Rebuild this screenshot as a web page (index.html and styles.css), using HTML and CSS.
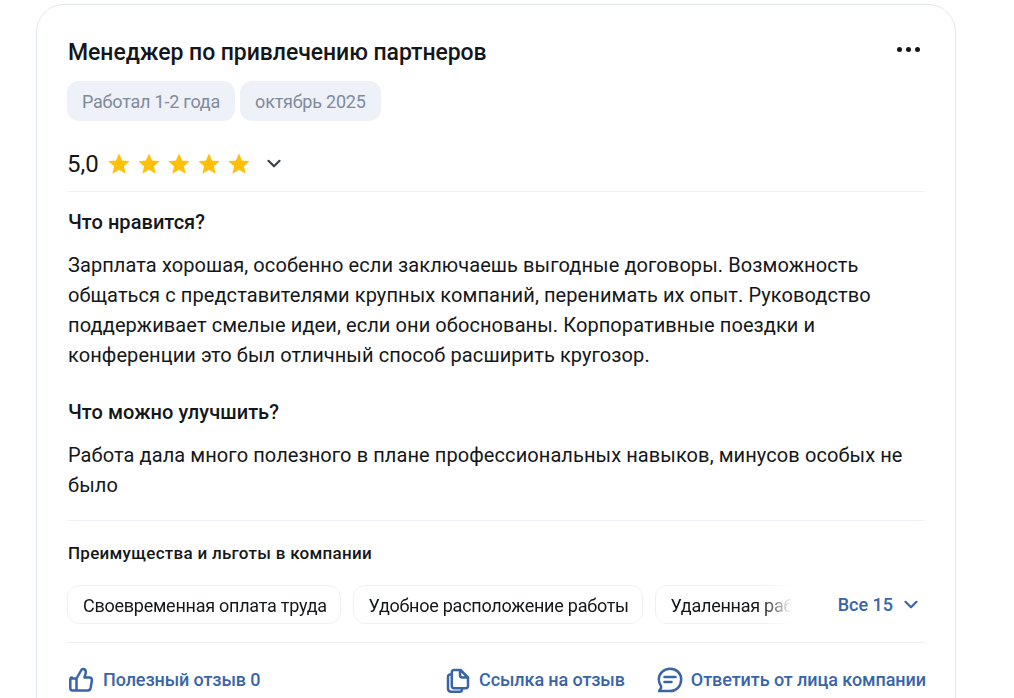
FILE: index.html
```html
<!DOCTYPE html>
<html lang="ru">
<head>
<meta charset="utf-8">
<title>Отзыв</title>
<link rel="stylesheet" href="styles.css">
</head>
<body>
<article class="card">
  <header class="head">
    <h2 class="title">Менеджер по привлечению партнеров</h2>
    <button class="more" aria-label="Ещё"><i></i><i></i><i></i></button>
  </header>
  <div class="tags">
    <span class="tag">Работал 1-2 года</span>
    <span class="tag">октябрь 2025</span>
  </div>
  <div class="rating">
    <span class="score">5,0</span>
    <span class="stars">
      <svg class="star" viewBox="0 0 24 24"><path d="M12 1.500l3.100 7.100 7.600.7-5.800 5 1.800 7.500L12 17.800l-6.700 4 1.800-7.500-5.800-5 7.600-.7z"/></svg>
      <svg class="star" viewBox="0 0 24 24"><path d="M12 1.500l3.100 7.100 7.600.7-5.800 5 1.800 7.500L12 17.800l-6.700 4 1.800-7.500-5.800-5 7.600-.7z"/></svg>
      <svg class="star" viewBox="0 0 24 24"><path d="M12 1.500l3.100 7.100 7.600.7-5.800 5 1.800 7.500L12 17.800l-6.700 4 1.800-7.500-5.800-5 7.600-.7z"/></svg>
      <svg class="star" viewBox="0 0 24 24"><path d="M12 1.500l3.100 7.100 7.600.7-5.800 5 1.800 7.500L12 17.800l-6.700 4 1.800-7.500-5.800-5 7.600-.7z"/></svg>
      <svg class="star" viewBox="0 0 24 24"><path d="M12 1.500l3.100 7.100 7.600.7-5.800 5 1.800 7.500L12 17.800l-6.700 4 1.800-7.500-5.800-5 7.600-.7z"/></svg>
    </span>
    <svg class="chev chev-dark" viewBox="0 0 14 10"><path d="M1.500 1.800L7 7.300l5.500-5.500"/></svg>
  </div>
  <section class="body">
    <h3 class="q">Что нравится?</h3>
    <p class="a">Зарплата хорошая, особенно если заключаешь выгодные договоры. Возможность общаться с представителями крупных компаний, перенимать их опыт. Руководство поддерживает смелые идеи, если они обоснованы. Корпоративные поездки и конференции это был отличный способ расширить кругозор.</p>
    <h3 class="q q2">Что можно улучшить?</h3>
    <p class="a">Работа дала много полезного в плане профессиональных навыков, минусов особых не было</p>
  </section>
  <section class="perks">
    <h4 class="perks-title">Преимущества и льготы в компании</h4>
    <div class="perks-row">
      <div class="perks-list">
        <span class="perk">Своевременная оплата труда</span>
        <span class="perk">Удобное расположение работы</span>
        <span class="perk">Удаленная работа</span>
      </div>
      <button class="all">Все 15
        <svg class="chev chev-blue" viewBox="0 0 14 10"><path d="M1.500 1.800L7 7.300l5.500-5.500"/></svg>
      </button>
    </div>
  </section>
  <footer class="actions">
    <a class="act act-first">
      <svg class="ico" viewBox="0 0 26 26"><path d="M8.500 11.500v12M3.800 11.500h4.700l4.600-8c.4-1 1-1.500 1.900-1.500 1.700 0 2.800 1.200 2.800 2.900 0 1.900-.8 3.700-1.300 5.600h5c1.600 0 2.700 1.400 2.400 3l-1.300 7.500c-.3 1.500-1.400 2.500-2.900 2.500H4.500c-1.300 0-2.200-.9-2.200-2.200v-8.300c0-1.300.6-2.500 1.500-2.500z"/></svg>
      Полезный отзыв 0
    </a>
    <div class="act-right">
      <a class="act">
        <svg class="ico" viewBox="0 0 26 26"><path d="M9 3h6.500L23 10.500V19c0 1.300-.9 2.200-2.200 2.200H9c-1.300 0-2.200-.9-2.200-2.200V5.200C6.800 3.900 7.700 3 9 3zM15 3.200V8c0 1.600 1 2.600 2.600 2.600h5.200M6.800 7.500H5.200C3.900 7.500 3 8.400 3 9.700v11.800c0 1.900 1.300 3.200 3.200 3.200h8.600c1.300 0 2.200-.9 2.200-2.200v-1.200"/></svg>
        Ссылка на отзыв
      </a>
      <a class="act act-reply">
        <svg class="ico" viewBox="0 0 26 26"><path d="M13 1.800C6.700 1.800 1.800 6.600 1.800 12.600c0 2.300.7 4.400 2 6.100.5.700.4 3-1.800 5.300h9.500c.5.100 1 .1 1.500.1 6.300 0 11.200-4.900 11.200-11.500S19.300 1.800 13 1.800zM7.500 10h11M7.500 15h7"/></svg>
        Ответить от лица компании
      </a>
    </div>
  </footer>
</article>
</body>
</html>
```
FILE: styles.css
```css
* { box-sizing: border-box; }
html, body { margin: 0; height: 698px; overflow: hidden; background: #fff; }
body {
  font-family: Roboto, "Noto Sans", sans-serif;
  color: #14171a;
  padding: 4px 58px 0 36px;
}
.card {
  border: 1px solid #e1e6ef;
  border-radius: 28px;
  padding: 31px 30px 0;
  height: 720px;
}
.head { display: flex; justify-content: space-between; align-items: flex-start; }
.title { margin: 0; padding-left: 1px; font-size: 23px; line-height: 34px; font-weight: 500; letter-spacing: -.06px; }
.more { display: flex; gap: 4px; border: 0; background: none; padding: 0; margin: 11px 5px 0 0; }
.more i { width: 5px; height: 5px; border-radius: 50%; background: #14171a; }
.tags { display: flex; gap: 5px; margin-top: 11px; }
.tag {
  background: #eef1f8;
  color: #7f8a9c;
  font-size: 18px;
  letter-spacing: -.22px;
  line-height: 40px;
  height: 40px;
  padding: 1px 15px 0;
  border-radius: 12px;
}
.rating { display: flex; align-items: center; height: 36px; margin-top: 25px; }
.score { font-size: 24px; line-height: 36px; font-weight: 400; margin-right: 8px; }
.stars { display: flex; gap: 6px; }
.star { width: 24px; height: 24px; fill: #ffc107; display: block; }
.chev { fill: none; stroke-width: 2.200; stroke-linecap: round; stroke-linejoin: round; display: block; }
.chev-dark { width: 14px; height: 10px; stroke: #3c4048; margin-left: 16px; }
.body { border-top: 1px solid #eef0f5; margin-top: 9px; padding: 15px 0 20px 1px; }
.q { margin: 0; font-size: 20px; line-height: 30px; font-weight: 500; letter-spacing: .05px; }
.q2 { margin-top: 27px; }
.a { margin: 13px 0 0; font-size: 20px; line-height: 30px; font-weight: 400; letter-spacing: .085px; }
.perks { border-top: 1px solid #eef0f5; padding-top: 20px; }
.perks-title { margin: 0; padding-left: 1px; font-size: 17px; line-height: 24px; font-weight: 500; letter-spacing: .28px; }
.perks-row { display: flex; justify-content: space-between; align-items: center; margin-top: 20px; }
.perks-list {
  display: flex;
  gap: 11.700px;
  width: 725px;
  overflow: hidden;
  -webkit-mask-image: linear-gradient(to right, #000 695px, transparent 725px);
  mask-image: linear-gradient(to right, #000 695px, transparent 725px);
}
.perk {
  flex: none;
  border: 1px solid #eef0f7;
  border-radius: 12px;
  height: 39px;
  line-height: 38px;
  padding: 1px 13px 0 15px;
  font-size: 18px;
  letter-spacing: -.25px;
}
.all {
  display: flex;
  align-items: center;
  gap: 11px;
  border: 0;
  background: none;
  padding: 0 7px 0 0;
  font: 500 18px/30px Roboto, sans-serif;
  color: #3a64a8;
}
.chev-blue { width: 14px; height: 10px; stroke: #3a64a8; }
.actions {
  display: flex;
  justify-content: space-between;
  border-top: 1px solid #eef0f5;
  margin-top: 18px;
  padding-top: 23px;
}
.act-right { display: flex; gap: 32px; margin-right: -1px; }
.act {
  display: flex;
  align-items: center;
  gap: 8px;
  font-size: 18px;
  letter-spacing: -.1px;
  line-height: 28px;
  font-weight: 500;
  color: #3a64a8;
  white-space: nowrap;
}
.act-first { padding-left: 1px; gap: 9px; }
.act-reply { letter-spacing: -.07px; }
.ico { width: 26px; height: 26px; fill: none; stroke: #3a64a8; stroke-width: 2.500; stroke-linejoin: round; stroke-linecap: round; flex: none; }
```
